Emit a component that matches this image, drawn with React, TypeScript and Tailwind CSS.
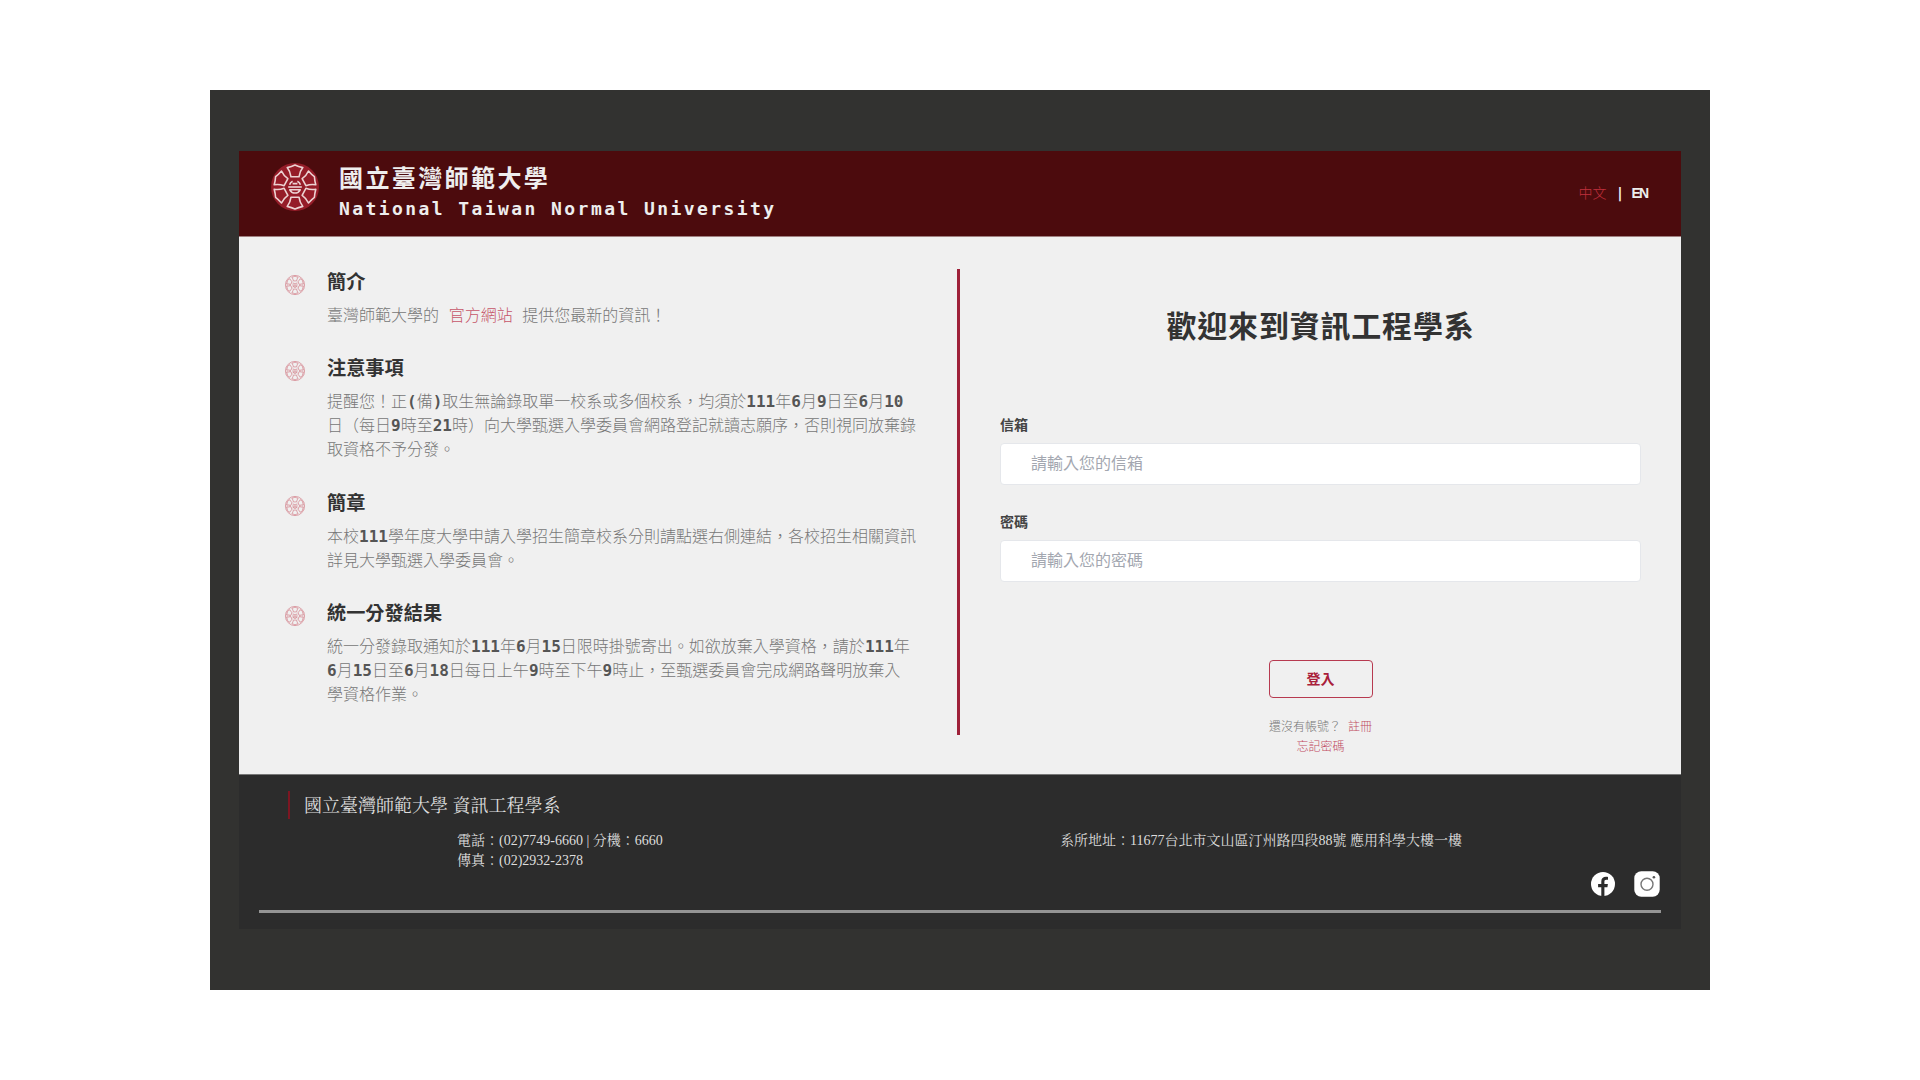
import React from "react";

const PETAL = "M-7.8 -19.4 Q-3.4 -20.4 0 -22 Q3.4 -20.4 7.8 -19.4 Q4.6 -15.4 4 -10.2 H-4 Q-4.6 -15.4 -7.8 -19.4Z";
const ANGLES = [0, 62, 118, 180, 242, 298];

function Emblem({ className, stroke, fill, width, ring }: { className: string; stroke: string; fill: string; width: number; ring?: boolean }) {
  return (
    <svg viewBox="-25 -25 50 50" className={className} fill="none" stroke={stroke} strokeWidth={width} strokeLinejoin="round">
      <circle r="24" fill={fill} stroke={ring ? stroke : "none"} />
      {ANGLES.map((a) => (
        <path key={a} d={PETAL} transform={`rotate(${a})`} />
      ))}
      <path d="M-5.4 -2.2 Q-4.8 -4.6 -2.4 -5.8 M2.4 -5.8 Q4.8 -4.6 5.4 -2.2 M-2.4 -3.4 H2.4" />
      <path d="M-5.2 2.8 A5.8 5.8 0 0 0 5.2 2.8Z" />
      <path d="M-6.8 0H6.8" />
    </svg>
  );
}

// Splits a line so that digits and half-width parentheses are set heavier than the Chinese text.
function Line({ text }: { text: string }) {
  return (
    <span className="block whitespace-nowrap">
      {text.split(/([0-9()]+)/).map((part, i) =>
        i % 2 ? (
          <b key={i} className="font-bold text-[#555555]">{part}</b>
        ) : (
          <span key={i}>{part}</span>
        )
      )}
    </span>
  );
}

function Section({ title, children }: { title: string; children: React.ReactNode }) {
  return (
    <section className="mb-[26.4px] flex">
      <Emblem className="mt-[6.8px] mr-[22px] h-5 w-5 shrink-0" stroke="#cf7480" fill="none" width={1.6} ring />
      <div>
        <h2 className="mb-[6px] h-[30px] text-[19.2px] leading-[30px] font-bold text-[#333333]">{title}</h2>
        <p className="text-base leading-6 font-light text-[#777777]">{children}</p>
      </div>
    </section>
  );
}

function Field({ label, placeholder, type }: { label: string; placeholder: string; type: string }) {
  return (
    <label className="mb-[27px] block">
      <span className="block h-[28px] text-[14px] leading-[21px] font-bold text-[#444444]">{label}</span>
      <input
        type={type}
        placeholder={placeholder}
        className="block h-[42px] w-full rounded-[4px] border border-[#e5e7eb] bg-white px-[30px] pb-[2px] text-base font-normal placeholder:text-[#a3a7b0]"
      />
    </label>
  );
}

export default function App() {
  return (
    <div className="flex h-[1080px] w-[1920px] items-center justify-center bg-white font-['DejaVu_Sans_Mono','Noto_Sans_CJK_TC',monospace]">
      <div className="h-[900px] w-[1500px] bg-[#323230] px-[29px] pt-[61px]">
        <div className="flex h-[778px] w-[1442px] flex-col">
          <header className="flex h-[86px] shrink-0 justify-between border-b border-[#a08080] bg-[#4c0b0d] pl-[31px] pr-[34px]">
            <div className="flex">
              <Emblem className="mt-[11px] h-[50px] w-[50px]" stroke="#ecd2d2" fill="#951c28" width={1.6} />
              <div className="ml-[19px] pt-[10px] text-[#eeeeee]">
                <div className="h-[36px] text-[24px] leading-[36px] font-bold tracking-[2.4px] whitespace-nowrap">國立臺灣師範大學</div>
                <div className="text-[18px] leading-[24px] font-bold tracking-[2.42px] whitespace-nowrap">National Taiwan Normal University</div>
              </div>
            </div>
            <div className="mt-[30px] flex h-6 items-center text-[14px] font-light text-[#c0303c]">
              <span>中文</span>
              <span className="mr-[7px] ml-[9px] w-[9px] text-center font-bold text-[#eeeeee]">|</span>
              <span className="font-['Liberation_Sans',sans-serif] text-[14px] font-bold tracking-[-2px] text-[#eeeeee]">EN</span>
            </div>
          </header>

          <main className="flex h-[537px] shrink-0 bg-[#f0f0f0] pt-[32px]">
            <div className="h-[466px] w-[721px] border-r-[3px] border-[#9e2139] pl-[46px]">
              <div className="-mt-[1px]">
                <Section title="簡介">
                  <span className="block whitespace-nowrap">
                    臺灣師範大學的 <a className="text-[#c65569]">官方網站</a> 提供您最新的資訊！
                  </span>
                </Section>
                <Section title="注意事項">
                  <Line text="提醒您！正(備)取生無論錄取單一校系或多個校系，均須於111年6月9日至6月10" />
                  <Line text="日（每日9時至21時）向大學甄選入學委員會網路登記就讀志願序，否則視同放棄錄" />
                  <Line text="取資格不予分發。" />
                </Section>
                <Section title="簡章">
                  <Line text="本校111學年度大學申請入學招生簡章校系分則請點選右側連結，各校招生相關資訊" />
                  <Line text="詳見大學甄選入學委員會。" />
                </Section>
                <Section title="統一分發結果">
                  <Line text="統一分發錄取通知於111年6月15日限時掛號寄出。如欲放棄入學資格，請於111年" />
                  <Line text="6月15日至6月18日每日上午9時至下午9時止，至甄選委員會完成網路聲明放棄入" />
                  <Line text="學資格作業。" />
                </Section>
              </div>
            </div>
            <form className="flex-1 pt-[35px] pr-[40px] pl-[40px]">
              <h1 className="mb-[65px] h-[46px] text-center text-[30px] leading-[46px] font-bold tracking-[0.8px] text-[#333333]">歡迎來到資訊工程學系</h1>
              <Field label="信箱" placeholder="請輸入您的信箱" type="email" />
              <Field label="密碼" placeholder="請輸入您的密碼" type="password" />
              <div className="mt-[78px] flex flex-col items-center">
                <button type="button" className="mb-[19px] h-[38px] w-[104px] rounded-[4px] border border-[#b73a50] pt-px text-[14px] font-bold text-[#a9203a]">登入</button>
                <div className="text-center text-[12px] leading-[20px] font-light whitespace-nowrap text-[#777777]">
                  <div>還沒有帳號？ <a className="text-[#c04a60]">註冊</a></div>
                  <a className="block text-[#c04a60]">忘記密碼</a>
                </div>
              </div>
            </form>
          </main>

          <footer className="h-[155px] border-t border-[#777777] bg-[#2c2c2c] px-[20px] pt-[16px] font-['Liberation_Serif','Noto_Serif_CJK_TC','Noto_Sans_CJK_TC',serif] text-[#dddddd]">
            <div className="ml-[29px] h-[28px] border-l-2 border-[#7d1622] pt-px pl-[14px] text-[18px] leading-[28px] font-normal">國立臺灣師範大學 資訊工程學系</div>
            <div className="mt-[12px] flex h-[40px] text-[14px] leading-[20px]">
              <div className="w-[604px] pl-[198px]">
                <div>電話：(02)7749-6660 | 分機：6660</div>
                <div>傳真：(02)2932-2378</div>
              </div>
              <div className="pl-[197px] whitespace-nowrap">系所地址：11677台北市文山區汀州路四段88號 應用科學大樓一樓</div>
            </div>
            <div className="mr-px flex h-[26px] items-center justify-end gap-[19px]">
              <svg viewBox="0 0 24 24" className="h-6 w-6">
                <circle cx="12" cy="12" r="12" fill="#ffffff" />
                <path d="M10.3 24v-8.7H7.1v-3.2h3.2V9.4c0-3.2 1.9-4.7 4.7-4.7.9 0 1.7.1 2 .2v2.9h-1.7c-1.5 0-1.9.8-1.9 1.9v2.4h3.5l-.5 3.2h-3V24z" fill="#2c2c2c" />
              </svg>
              <svg viewBox="0 0 26 26" className="h-[26px] w-[26px]">
                <rect x="0.3" y="0.3" width="25.4" height="25.4" rx="7" fill="#ffffff" />
                <circle cx="13" cy="13.3" r="6" fill="none" stroke="#777777" strokeWidth="1.4" />
                <circle cx="19.9" cy="6.2" r="1.3" fill="#555555" />
              </svg>
            </div>
            <div className="mt-[13px] h-[3px] bg-[#959595]" />
          </footer>
        </div>
      </div>
    </div>
  );
}
